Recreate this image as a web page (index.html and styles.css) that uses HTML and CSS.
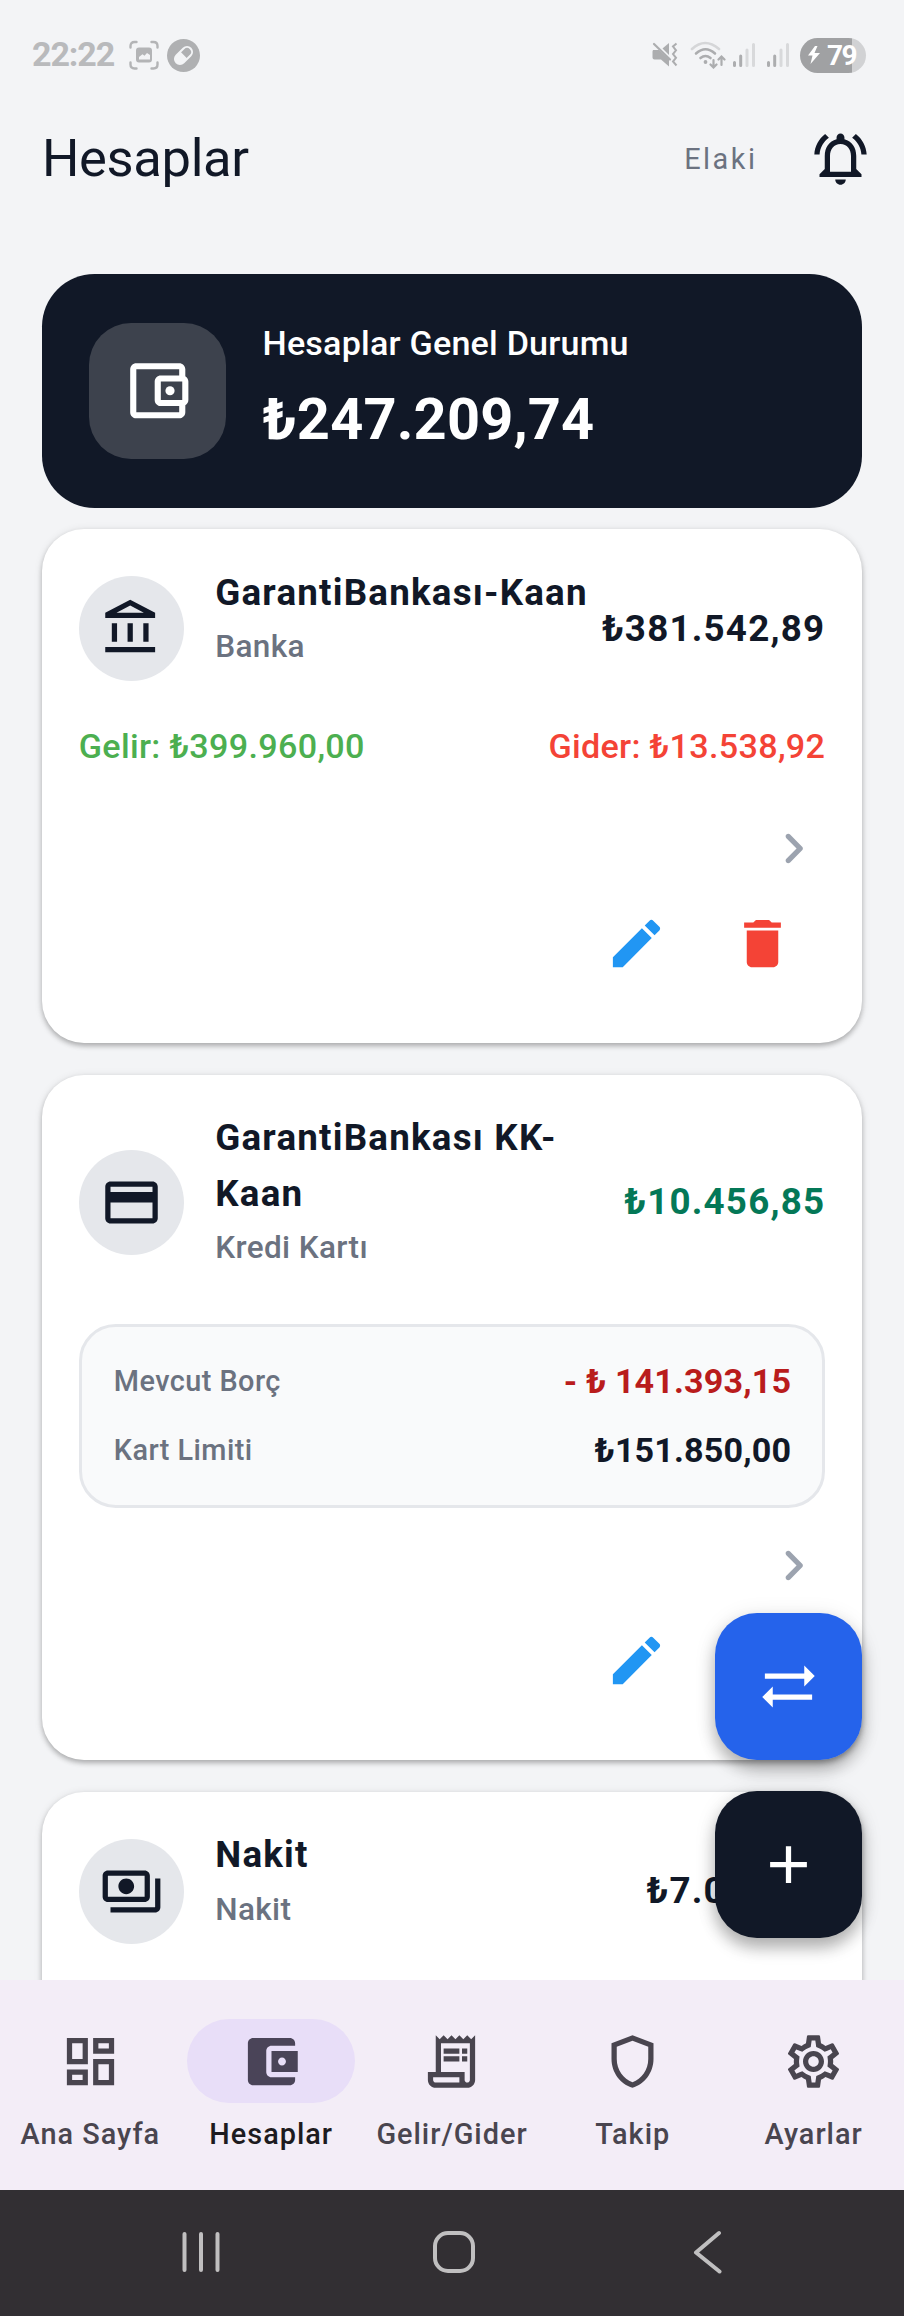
FILE: index.html
```html
<!DOCTYPE html>
<html lang="tr">
<head>
<meta charset="utf-8">
<title>Hesaplar</title>
<link rel="stylesheet" href="styles.css">
</head>
<body>
<div class="app">
  <div class="statusbar">
    <span class="clock">22:22</span>
    <svg class="st-capture" width="30" height="30" viewBox="0 0 30 30" fill="none" stroke="#b3b4b6" stroke-width="2.4" stroke-linecap="round"><path d="M1.5 7.500V6Q1.500 2 5.500 2H7.500M22.500 2H24.500Q28.500 2 28.500 6V7.500M28.500 22.500V24.500Q28.500 28.500 24.500 28.500H22.500M7.500 28.500H5.500Q1.500 28.500 1.500 24.500V22.500"/><path fill="#b3b4b6" stroke="none" fill-rule="evenodd" d="M10 7.500h10a3 3 0 0 1 3 3v9a3 3 0 0 1-3 3H10a3 3 0 0 1-3-3v-9a3 3 0 0 1 3-3zM10 19.500h11v-4.500l-3-2-2.500 2.800-2-1.500-3.500 2.800z"/></svg>
    <svg class="st-pill" width="33" height="33" viewBox="0 0 33 33"><circle cx="16.500" cy="16.500" r="16.500" fill="#afb0b2"/><g transform="rotate(-45 16.500 16.500)"><rect x="6.500" y="11.500" width="20" height="10" rx="5" fill="none" stroke="#f3f4f6" stroke-width="2"/><path fill="#f3f4f6" d="M17 11.500h-5.500a5 5 0 0 0 0 10H17z"/></g></svg>
    <span class="spacer"></span>
    <svg class="st-mute" width="26" height="26" viewBox="0 0 26 26" fill="#acadaf"><path d="M1 8h6l10 9v7.500l-8-7H2.500Q.5 17.500.5 15.500V9.500z"/><path d="M17 1v12L10.500 6.500z"/><path d="M2 2 18 17.500" stroke="#acadaf" stroke-width="2.200" stroke-linecap="round"/><path d="M24.500 1.500 21 4.500l3 3.800-3 3.700 3 3.800-3 3.700 3.500 4" fill="none" stroke="#acadaf" stroke-width="2"/></svg>
    <svg class="st-wifi" width="36" height="28" viewBox="0 0 36 28" fill="none" stroke-linecap="round" stroke-width="2.600"><path stroke="#d5d6d8" d="M2 8q13-12 27 0"/><path stroke="#acadaf" d="M6 12.500q9.500-8.500 19 0M10.500 17q5-4 10 0"/><circle cx="15.500" cy="21" r="1.900" fill="#acadaf"/><path stroke="#acadaf" stroke-width="2.200" d="M23.500 19v7M20.500 23.500l3 3 3-3M31.500 24v-8.500M28.500 18.500l3-3 3 3"/></svg>
    <svg class="st-sig1" width="24" height="26" viewBox="0 0 24 26"><path stroke="#acadaf" stroke-width="3" stroke-linecap="round" d="M2.500 20.500v3M8.700 14v9.500"/><path stroke="#d8d9db" stroke-width="3" stroke-linecap="round" d="M15 8v15.500M21.500 2.500v21"/></svg>
    <svg class="st-sig2" width="24" height="26" viewBox="0 0 24 26"><path stroke="#acadaf" stroke-width="3" stroke-linecap="round" d="M2.500 20.500v3M8.700 14v9.500"/><path stroke="#d8d9db" stroke-width="3" stroke-linecap="round" d="M15 8v15.500M21.500 2.500v21"/></svg>
    <span class="battery"><svg width="14" height="20" viewBox="0 0 14 20"><path fill="#fff" d="M8 1 1 10.500h4.500L3.500 19 13 8H7.500L10.500 1z"/></svg><b>79</b></span>
  </div>
  <header class="appbar">
    <h1>Hesaplar</h1>
    <span class="user">Elaki</span>
    <svg class="icon bell" viewBox="0 0 24 24"><path d="M12 22c1.100 0 2-.9 2-2h-4c0 1.100.9 2 2 2zm6-6v-5c0-3.070-1.630-5.640-4.500-6.320V4c0-.83-.67-1.500-1.500-1.500s-1.500.67-1.500 1.500v.68C7.640 5.360 6 7.920 6 11v5l-2 2v1h16v-1l-2-2zm-2 1H8v-6c0-2.480 1.510-4.500 4-4.500s4 2.020 4 4.500v6zM7.580 4.080 6.150 2.650C3.750 4.480 2.170 7.300 2.030 10.500h2c.15-2.650 1.510-4.970 3.550-6.420zm12.390 6.420h2c-.15-3.200-1.730-6.020-4.120-7.850l-1.420 1.430c2.020 1.450 3.390 3.770 3.540 6.420z"/></svg>
  </header>
  <main class="list">
    <section class="hero">
      <div class="hero-icon"><svg viewBox="0 0 24 24"><path d="M21 7.280V5c0-1.100-.9-2-2-2H5c-1.110 0-2 .9-2 2v14c0 1.100.89 2 2 2h14c1.100 0 2-.9 2-2v-2.280c.59-.35 1-.98 1-1.720V9c0-.74-.41-1.370-1-1.720zM20 9v6h-7V9h7zM5 19V5h14v2h-6c-1.100 0-2 .9-2 2v6c0 1.100.9 2 2 2h6v2H5z"/><circle cx="16" cy="12" r="1.500"/></svg></div>
      <div class="hero-text">
        <div class="hero-label">Hesaplar Genel Durumu</div>
        <div class="hero-amount">₺247.209,74</div>
      </div>
    </section>

    <article class="card">
      <div class="head">
        <div class="avatar"><svg class="icon" viewBox="0 0 24 24"><path d="M6.500 10h-2v7h2v-7zm6 0h-2v7h2v-7zm8.500 9H2v2h19v-2zm-2.500-9h-2v7h2v-7zm-7-6.740L16.710 6H6.290l5.210-2.740m0-2.260L2 6v2h19V6l-9.500-5z"/></svg></div>
        <div class="names"><div class="name">GarantiBankası-Kaan</div><div class="kind">Banka</div></div>
        <div class="amount">₺381.542,89</div>
      </div>
      <div class="flows"><span class="in">Gelir: ₺399.960,00</span><span class="out">Gider: ₺13.538,92</span></div>
      <div class="more"><svg class="icon" viewBox="0 0 24 24"><path d="M9.290 6.710c-.39.39-.39 1.020 0 1.410L13.170 12l-3.880 3.880c-.39.39-.39 1.020 0 1.410.39.39 1.020.39 1.410 0l4.590-4.590c.39-.39.39-1.020 0-1.410L10.700 6.700c-.38-.38-1.020-.38-1.410.01z"/></svg></div>
      <div class="actions">
        <svg class="icon edit" viewBox="0 0 24 24"><path d="M3 17.250V21h3.750L17.810 9.940l-3.750-3.750L3 17.250zM20.710 7.040c.39-.39.39-1.020 0-1.410l-2.340-2.340c-.39-.39-1.020-.39-1.410 0l-1.830 1.830 3.750 3.750 1.830-1.830z"/></svg>
        <svg class="icon delete" viewBox="0 0 24 24"><path d="M6 19c0 1.100.9 2 2 2h8c1.100 0 2-.9 2-2V7H6v12zM19 4h-3.500l-1-1h-5l-1 1H5v2h14V4z"/></svg>
      </div>
    </article>

    <article class="card">
      <div class="head">
        <div class="avatar"><svg class="icon" viewBox="0 0 24 24"><path d="M20 4H4c-1.110 0-1.990.89-1.990 2L2 18c0 1.110.89 2 2 2h16c1.110 0 2-.89 2-2V6c0-1.110-.89-2-2-2zm0 14H4v-6h16v6zm0-10H4V6h16v2z"/></svg></div>
        <div class="names"><div class="name">GarantiBankası KK-<br>Kaan</div><div class="kind">Kredi Kartı</div></div>
        <div class="amount positive">₺10.456,85</div>
      </div>
      <div class="limits">
        <div class="limit-row"><span>Mevcut Borç</span><b class="debt">- ₺ 141.393,15</b></div>
        <div class="limit-row"><span>Kart Limiti</span><b>₺151.850,00</b></div>
      </div>
      <div class="more"><svg class="icon" viewBox="0 0 24 24"><path d="M9.290 6.710c-.39.39-.39 1.020 0 1.410L13.170 12l-3.880 3.880c-.39.39-.39 1.020 0 1.410.39.39 1.020.39 1.410 0l4.590-4.590c.39-.39.39-1.020 0-1.410L10.700 6.700c-.38-.38-1.020-.38-1.410.01z"/></svg></div>
      <div class="actions">
        <svg class="icon edit" viewBox="0 0 24 24"><path d="M3 17.250V21h3.750L17.810 9.940l-3.750-3.750L3 17.250zM20.710 7.040c.39-.39.39-1.020 0-1.410l-2.340-2.340c-.39-.39-1.020-.39-1.410 0l-1.830 1.830 3.750 3.750 1.830-1.830z"/></svg>
        <svg class="icon delete" viewBox="0 0 24 24"><path d="M6 19c0 1.100.9 2 2 2h8c1.100 0 2-.9 2-2V7H6v12zM19 4h-3.500l-1-1h-5l-1 1H5v2h14V4z"/></svg>
      </div>
    </article>

    <article class="card clipped">
      <div class="head">
        <div class="avatar"><svg class="icon" viewBox="0 0 24 24"><path d="M19 14V6c0-1.100-.9-2-2-2H3c-1.100 0-2 .9-2 2v8c0 1.100.9 2 2 2h14c1.100 0 2-.9 2-2zm-2 0H3V6h14v8zm-7-7c-1.660 0-3 1.340-3 3s1.340 3 3 3 3-1.340 3-3-1.340-3-3-3zm13 0v11c0 1.100-.9 2-2 2H4v-2h17V7h2z"/></svg></div>
        <div class="names"><div class="name">Nakit</div><div class="kind">Nakit</div></div>
        <div class="amount">₺7.000,00</div>
      </div>
    </article>
  </main>

  <div class="fabs">
    <div class="fab transfer"><svg class="icon" viewBox="0 0 24 24"><path d="m22 8-4-4v3H3v2h15v3l4-4zM2 16l4 4v-3h15v-2H6v-3l-4 4z"/></svg></div>
    <div class="fab add"><svg class="icon" viewBox="0 0 24 24"><path d="M19 13h-6v6h-2v-6H5v-2h6V5h2v6h6z"/></svg></div>
  </div>

  <nav class="tabs">
    <div class="tab"><div class="ind"><svg class="icon" viewBox="0 0 24 24"><path d="M19 5v2h-4V5h4M9 5v6H5V5h4m10 8v6h-4v-6h4M9 17v2H5v-2h4M21 3h-8v6h8V3zM11 3H3v10h8V3zm10 8h-8v10h8V11zm-10 4H3v6h8v-6z"/></svg></div><span>Ana Sayfa</span></div>
    <div class="tab active"><div class="ind"><svg class="icon" viewBox="0 0 24 24"><path d="M21 18v1c0 1.100-.9 2-2 2H5c-1.110 0-2-.9-2-2V5c0-1.100.89-2 2-2h14c1.100 0 2 .9 2 2v1h-9c-1.110 0-2 .9-2 2v8c0 1.100.89 2 2 2h9zm-9-2h10V8H12v8zm4-2.500c-.83 0-1.500-.67-1.500-1.500s.67-1.500 1.500-1.500 1.500.67 1.500 1.500-.67 1.500-1.500 1.500z"/></svg></div><span>Hesaplar</span></div>
    <div class="tab"><div class="ind"><svg class="icon" viewBox="0 0 24 24"><path d="M19.500 3.500 18 2l-1.500 1.500L15 2l-1.500 1.500L12 2l-1.500 1.500L9 2 7.500 3.500 6 2v14H3v3c0 1.660 1.340 3 3 3h12c1.660 0 3-1.340 3-3V2l-1.500 1.500zM15 20H6c-.55 0-1-.45-1-1v-1h10v2zm4-1c0 .55-.45 1-1 1s-1-.45-1-1v-3H8V5h11v14z"/><path d="M9 7h6v2H9zM16 7h2v2h-2zM9 10h6v2H9zM16 10h2v2h-2z"/></svg></div><span>Gelir/Gider</span></div>
    <div class="tab"><div class="ind"><svg class="icon" viewBox="0 0 24 24"><path d="M12 2 4 5v6.090c0 5.050 3.410 9.760 8 10.910 4.590-1.150 8-5.860 8-10.910V5l-8-3zm6 9.090c0 4-2.550 7.700-6 8.830-3.450-1.130-6-4.820-6-8.830v-4.700l6-2.250 6 2.250v4.700z"/></svg></div><span>Takip</span></div>
    <div class="tab"><div class="ind"><svg class="icon" viewBox="0 0 24 24"><path d="M19.430 12.980c.04-.32.07-.64.07-.98 0-.34-.03-.66-.07-.98l2.110-1.650c.19-.15.24-.42.12-.64l-2-3.460c-.09-.16-.26-.25-.44-.25-.06 0-.12.01-.17.03l-2.490 1c-.52-.4-1.080-.73-1.690-.98l-.38-2.650C14.460 2.180 14.250 2 14 2h-4c-.25 0-.46.18-.49.42l-.38 2.650c-.61.25-1.170.59-1.690.98l-2.490-1c-.06-.02-.12-.03-.18-.03-.17 0-.34.09-.43.25l-2 3.460c-.13.22-.07.49.12.64l2.110 1.650c-.04.32-.07.65-.07.98s.03.66.07.98l-2.110 1.650c-.19.15-.24.42-.12.64l2 3.460c.09.16.26.25.44.25.06 0 .12-.01.17-.03l2.490-1c.52.4 1.080.73 1.690.98l.38 2.650c.03.24.24.42.49.42h4c.25 0 .46-.18.49-.42l.38-2.650c.61-.25 1.170-.59 1.690-.98l2.490 1c.06.02.12.03.18.03.17 0 .34-.09.43-.25l2-3.460c.12-.22.07-.49-.12-.64l-2.110-1.650zm-1.980-1.710c.04.31.05.52.05.73s-.02.43-.05.73l-.14 1.130.89.7 1.080.84-.7 1.210-1.270-.51-1.040-.42-.9.68c-.43.32-.84.56-1.250.73l-1.060.43-.16 1.130-.2 1.350h-1.400l-.19-1.350-.16-1.130-1.060-.43c-.43-.18-.83-.41-1.230-.71l-.91-.7-1.060.43-1.270.51-.7-1.210 1.080-.84.89-.7-.14-1.130c-.03-.31-.05-.54-.05-.74s.02-.43.05-.73l.14-1.130-.89-.7-1.080-.84.7-1.210 1.270.51 1.040.42.9-.68c.43-.32.84-.56 1.250-.73l1.060-.43.16-1.130.2-1.350h1.390l.19 1.350.16 1.130 1.060.43c.43.18.83.41 1.230.71l.91.7 1.060-.43 1.270-.51.7 1.210-1.070.85-.89.7.14 1.130zM12 8c-2.210 0-4 1.790-4 4s1.790 4 4 4 4-1.790 4-4-1.790-4-4-4zm0 6c-1.100 0-2-.9-2-2s.9-2 2-2 2 .9 2 2-.9 2-2 2z"/></svg></div><span>Ayarlar</span></div>
  </nav>
  <div class="sysnav">
    <svg width="40" height="44" viewBox="0 0 40 44"><path d="M3.500 4v36M20 4v36M36.500 4v36"/></svg>
    <svg class="home" width="44" height="44" viewBox="0 0 44 44"><rect x="3" y="3" width="38" height="38" rx="13"/></svg>
    <svg width="32" height="44" viewBox="0 0 32 44"><path d="M27 3 4 22.500 27.500 41.500"/></svg>
  </div>
</div>
</body>
</html>
```
FILE: styles.css
```css
* { box-sizing: border-box; margin: 0; padding: 0; }

body {
  font-family: Roboto, "Liberation Sans", sans-serif;
  background: #f3f4f6;
  color: #111827;
}

.app {
  position: relative;
  display: flex;
  flex-direction: column;
  width: 904px;
  height: 2316px;
  overflow: hidden;
  background: #f3f4f6;
}

.icon { display: block; width: 63px; height: 63px; flex: none; fill: currentColor; }

/* Status bar */
.statusbar {
  display: flex;
  align-items: center;
  height: 110px;
  padding: 0 38px 0 32px;
}
.clock { width: 97px; font-size: 34px; font-weight: 700; line-height: 38px; padding-bottom: 2px; letter-spacing: -1.1px; color: #b9babc; }
.st-pill { margin-left: 8px; }
.spacer { flex: 1; }
.st-wifi { margin-left: 12px; }
.st-sig1 { margin-left: 6px; }
.st-sig2 { margin-left: 10px; }
.battery {
  display: flex;
  align-items: center;
  gap: 6px;
  width: 66px;
  height: 35px;
  margin-left: 10px;
  padding-left: 7px;
  border-radius: 18px;
  color: #fff;
  background: linear-gradient(90deg, #a0a1a3 52px, #d1d2d4 52px);
}
.battery b { font-size: 28px; line-height: 35px; letter-spacing: -1.5px; }

/* App bar */
.appbar { display: flex; align-items: center; height: 97px; padding: 0 32px 0 42px; }
.appbar h1 { flex: 1; padding-bottom: 2px; font-size: 52.5px; font-weight: 400; line-height: 60px; letter-spacing: -.35px; }
.user { margin-right: 51.5px; font-size: 28.9px; letter-spacing: 2.5px; color: #6b7280; }

/* Account list */
.list { flex: 1; min-height: 0; overflow: hidden; padding: 67px 42px 0; }

.hero {
  display: flex;
  align-items: center;
  gap: 36.75px;
  height: 233.5px;
  padding: 0 47.25px;
  border-radius: 52.5px;
  background: #111827;
  color: #fff;
}
.hero-icon {
  display: flex;
  align-items: center;
  justify-content: center;
  width: 136.5px;
  height: 136.5px;
  border-radius: 42px;
  background: #3d424d;
}
.hero-icon svg { width: 73.5px; height: 73.5px; fill: currentColor; }
.hero-label { font-size: 34.125px; font-weight: 500; line-height: 51px; letter-spacing: .2px; }
.hero-amount { margin-top: 7px; font-size: 57.75px; font-weight: 700; line-height: 87px; letter-spacing: .15px; }

.card {
  margin-bottom: 31.5px;
  padding: 36.75px;
  border-radius: 42px;
  background: #fff;
  box-shadow: 0 3px 5px rgba(0, 0, 0, .24), 0 1px 9px rgba(0, 0, 0, .1);
}
.hero + .card { margin-top: 21.5px; }
.clipped { height: 514px; }
.head { display: flex; align-items: center; }
.avatar {
  display: flex;
  align-items: center;
  justify-content: center;
  flex: none;
  width: 105px;
  height: 105px;
  border-radius: 50%;
  background: #e5e7eb;
}
.names { flex: 1; padding: 0 0 22px 31.5px; margin-top: -1px; white-space: nowrap; }
.name { font-size: 36.75px; font-weight: 700; line-height: 55.125px; letter-spacing: 1.2px; }
.kind { margin-top: 3px; font-size: 31.5px; font-weight: 500; line-height: 47.25px; letter-spacing: .37px; color: #6b7280; }
.amount { padding-bottom: 1.5px; font-size: 36.75px; font-weight: 700; letter-spacing: 1.2px; }
.positive { color: #047857; }

.flows {
  display: flex;
  justify-content: space-between;
  height: 67.6px;
  margin-top: 31.5px;
  font-size: 34.125px;
  font-weight: 500;
  line-height: 44.4px;
  letter-spacing: .32px;
}
.in { color: #4caf50; }
.out { color: #f44336; }

.limits {
  display: flex;
  flex-direction: column;
  gap: 17.8px;
  height: 183.75px;
  margin-top: 31.5px;
  padding: 28.4px 31px 28px 32px;
  border: 3px solid #e5e7eb;
  border-radius: 36.75px;
  background: #f9fafb;
}
.limit-row {
  display: flex;
  align-items: center;
  justify-content: space-between;
  height: 51.2px;
  font-size: 28.875px;
  font-weight: 500;
  letter-spacing: .45px;
  color: #6b7280;
}
.limit-row b { font-size: 34.125px; letter-spacing: .15px; color: #111827; }
.limit-row .debt { color: #b91c1c; }

.more { display: flex; justify-content: flex-end; margin-top: 26.25px; color: #9ca3af; }
.actions { display: flex; align-items: center; justify-content: flex-end; gap: 63px; height: 126px; padding-right: 31.5px; }
.edit { color: #2196f3; }
.delete { color: #f44336; }

/* Floating buttons */
.fabs { position: absolute; right: 42px; bottom: 378px; display: flex; flex-direction: column; gap: 31.5px; }
.fab {
  display: flex;
  align-items: center;
  justify-content: center;
  width: 147px;
  height: 147px;
  border-radius: 42px;
  color: #fff;
  box-shadow: 0 10px 16px rgba(0, 0, 0, .27), 0 3px 22px rgba(0, 0, 0, .1);
}
.transfer { background: #2563eb; }
.add { background: #111827; }

/* Bottom tabs */
.tabs { display: flex; height: 210px; padding-top: 39px; background: #f3edf7; }
.tab { display: flex; flex: 1 0 0; flex-direction: column; align-items: center; gap: 12px; color: #49454f; }
.ind { display: flex; align-items: center; justify-content: center; width: 168px; height: 84px; border-radius: 42px; }
.tab span { font-size: 28.875px; font-weight: 500; line-height: 38px; letter-spacing: 1px; }
.active .ind { background: #e8def8; color: #4a4458; }
.active span { color: #1d1b20; }

/* System navigation */
.sysnav { display: flex; align-items: center; height: 126px; padding: 0 180px 3px 181px; justify-content: space-between; background: #322f33; }
.sysnav svg { fill: none; stroke: #c0bfc0; stroke-width: 4; stroke-linecap: round; stroke-linejoin: round; }
.sysnav .home { margin-right: 6px; }
```
